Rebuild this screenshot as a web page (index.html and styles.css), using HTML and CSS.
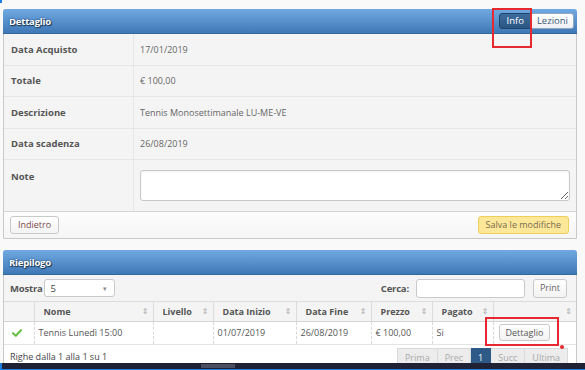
FILE: index.html
```html
<!DOCTYPE html>
<html lang="it">
<head>
<meta charset="utf-8">
<link rel="stylesheet" href="styles.css">
</head>
<body>
<div class="page">
  <section class="panel">
    <header class="panel-head">
      <span class="panel-title">Dettaglio</span>
      <div class="btn-group">
        <button class="seg seg-active">Info</button>
        <button class="seg">Lezioni</button>
      </div>
    </header>
    <div class="rows">
      <div class="row"><div class="lbl">Data Acquisto</div><div class="val">17/01/2019</div></div>
      <div class="row"><div class="lbl">Totale</div><div class="val">€ 100,00</div></div>
      <div class="row"><div class="lbl">Descrizione</div><div class="val">Tennis Monosettimanale LU-ME-VE</div></div>
      <div class="row"><div class="lbl">Data scadenza</div><div class="val">26/08/2019</div></div>
      <div class="row row-note"><div class="lbl">Note</div><div class="val"><textarea class="note"></textarea></div></div>
    </div>
    <footer class="panel-foot">
      <button class="btn">Indietro</button>
      <button class="btn btn-warn">Salva le modifiche</button>
    </footer>
  </section>

  <section class="panel panel2">
    <header class="panel-head"><span class="panel-title">Riepilogo</span></header>
    <div class="controls">
      <label class="ctl-lbl">Mostra <span class="select">5<span class="caret">▾</span></span></label>
      <div class="search">
        <span class="ctl-lbl">Cerca:</span>
        <span class="input"></span>
        <button class="btn btn-print">Print</button>
      </div>
    </div>
    <table class="grid">
      <thead>
        <tr>
          <th class="c0"></th>
          <th class="c1">Nome<span class="sort">⇕</span></th>
          <th class="c2">Livello<span class="sort">⇕</span></th>
          <th class="c3">Data Inizio<span class="sort">⇕</span></th>
          <th class="c4">Data Fine<span class="sort">⇕</span></th>
          <th class="c5">Prezzo<span class="sort">⇕</span></th>
          <th class="c6">Pagato<span class="sort">⇕</span></th>
          <th class="c7"><span class="sort">⇕</span></th>
        </tr>
      </thead>
      <tbody>
        <tr>
          <td class="c0"><svg class="check" viewBox="0 0 10 8" width="10" height="8"><path d="M1 4.2 L3.8 6.8 L9 1.2" fill="none" stroke="#6cc04a" stroke-width="2.2" stroke-linecap="round" stroke-linejoin="round"/></svg></td>
          <td>Tennis Lunedì 15:00</td>
          <td></td>
          <td>01/07/2019</td>
          <td>26/08/2019</td>
          <td>€ 100,00</td>
          <td>Si</td>
          <td class="c7"><button class="btn btn-det">Dettaglio</button></td>
        </tr>
      </tbody>
    </table>
    <div class="table-foot">
      <span class="info">Righe dalla 1 alla 1 su 1</span>
      <div class="pager">
        <span class="pg">Prima</span><span class="pg">Prec</span><span class="pg pg-cur">1</span><span class="pg">Succ</span><span class="pg">Ultima</span>
      </div>
    </div>
  </section>
  <div class="taskbar"><span class="tb-seg"></span></div>
  <span class="hl hl-info"></span>
  <span class="hl hl-det"></span>
  <span class="hl-dot"></span>
  <span class="corner"></span>
</div>
</body>
</html>
```
FILE: styles.css
```css
* { box-sizing: border-box; }
html, body { margin: 0; padding: 0; }
body {
  width: 585px; height: 370px; overflow: hidden;
  background: #f9f9f9;
  font-family: "Open Sans", "DejaVu Sans", sans-serif;
  font-size: 9.5px;
  color: #555;
}
.page { position: relative; padding: 9px 8px 0 3px; height: 370px; }
.panel {
  border: 1px solid #c9c9c9;
  border-radius: 3px 3px 0 0;
  background: #f4f4f4;
}
.panel-head {
  height: 25px;
  display: flex; align-items: center; justify-content: space-between;
  padding: 0 3px 0 6px;
  background: linear-gradient(#71a9e2, #3f78b6);
  border-bottom: 1px solid #33679c;
  margin: -1px -1px 0 -1px;
  border-radius: 3px 3px 0 0;
}
.panel-title {
  color: #fff; font-weight: 700; font-size: 9.5px;
  text-shadow: 0 0 2px #1d3550, 1px 1px 1px #1d3550;
  letter-spacing: -0.2px;
}
.btn-group { display: flex; }
.seg {
  font-family: inherit; font-size: 9.5px;
  height: 16px; padding: 0 5px; margin: 0;
  border: 1px solid #8fa9c4; background: linear-gradient(#fff, #eef1f4);
  color: #3d5a7a; line-height: 14px;
}
.seg:first-child { border-radius: 3px 0 0 3px; }
.seg:last-child { border-radius: 0 3px 3px 0; border-left: none; }
.seg-active { background: linear-gradient(#3d6c9c, #2b5683); color: #fff; border-color: #1f456c; padding: 0 7px; }
.rows { display: flex; flex-direction: column; }
.row {
  display: grid; grid-template-columns: 130px 1fr;
  height: 31.5px;
  border-bottom: 1px solid #e6e6e6;
}
.lbl {
  display: flex; align-items: center;
  padding-left: 7px;
  font-weight: 700; color: #555;
  border-right: 1px solid #e6e6e6;
}
.val { display: flex; align-items: center; padding-left: 6px; color: #666; font-size: 9px; }
.row-note { height: 52px; border-bottom: 1px solid #d4d4d4; }
.row-note .lbl { align-items: flex-start; padding-top: 10px; }
.row-note .val { align-items: flex-start; padding-top: 10px; padding-right: 6px; }
.note {
  width: 100%; height: 31px; resize: vertical;
  border: 1px solid #c8c8c8; border-radius: 3px; background: #fff;
  box-shadow: inset 0 1px 2px rgba(0,0,0,.06);
}
.panel-foot {
  height: 26px; display: flex; align-items: center; justify-content: space-between;
  padding: 0 7px 0 6px;
  background: linear-gradient(#fdfdfd, #f5f5f5);
  border-radius: 0 0 3px 3px;
}
.btn {
  font-family: inherit; font-size: 9px; color: #7a4a4a;
  height: 18px; padding: 0 7px; margin: 0;
  border: 1px solid #c9c9c9; border-radius: 3px;
  background: linear-gradient(#fff, #f3f3f3);
  line-height: 16px;
}
.btn-warn { background: #fde89a; border-color: #efcf5a; color: #7a6a4a; padding: 0 7px; }
.panel2 { margin-top: 11px; }
.controls {
  height: 27px; display: flex; align-items: center; justify-content: space-between;
  padding: 0 9px 0 6px;
  border-bottom: 1px solid #dcdcdc;
}
.ctl-lbl { font-weight: 700; color: #555; display: flex; align-items: center; letter-spacing: -0.2px; }
.select {
  display: inline-flex; align-items: center; justify-content: space-between;
  width: 71px; height: 18px; margin-left: 1px;
  border: 1px solid #c9c9c9; border-radius: 3px; background: #fff;
  font-weight: 400; color: #444; padding: 0 7px 0 6px; letter-spacing: 0;
}
.caret { font-size: 7px; color: #888; }
.search { display: flex; align-items: center; }
.input {
  display: inline-block; width: 109px; height: 19px; margin-left: 7px;
  border: 1px solid #c9c9c9; border-radius: 3px; background: #fff;
}
.btn-print { margin-left: 8px; height: 19px; color: #666; padding: 0 6px; }
.grid { width: 100%; border-collapse: collapse; table-layout: fixed; background: #fff; }
.grid th {
  height: 19px; text-align: left; font-weight: 700; color: #555; font-size: 9px;
  background: #f4f4f4; border-right: 1px solid #dcdcdc; border-bottom: 1px solid #d4d4d4;
  padding: 0 4px 0 9px; position: relative;
}
.grid th.c0 { width: 30px; }
.grid th.c1 { width: 119px; }
.grid th.c2 { width: 60px; }
.grid th.c3 { width: 83px; }
.grid th.c4 { width: 75px; }
.grid th.c5 { width: 61px; }
.grid th.c6 { width: 61px; }
.grid th.c7 { border-right: none; }
.sort { position: absolute; right: 4px; top: 3px; font-size: 8px; color: #aaa; font-weight: 400; }
.grid td {
  height: 23px; font-size: 9px; color: #555; padding: 0 4px;
  border-right: 1px dashed #d8d8d8; border-bottom: 1px solid #e4e4e4;
  white-space: nowrap;
}
.grid td.c0 { padding-left: 8px; }
.grid td.c7 { border-right: none; padding-left: 5px; }
.check { display: block; }
.btn-det { color: #555; height: 17px; padding: 0 6px; }
.table-foot {
  height: 22px; display: flex; align-items: center; justify-content: space-between;
  padding: 2px 8px 0 6px; background: #fff;
}
.info { color: #444; font-size: 9px; }
.pager { display: flex; align-self: flex-end; }
.pg {
  height: 19px; display: flex; align-items: center; padding: 0 7px;
  background: #ececec; border: 1px solid #dadada; border-left: none;
  color: #aaa; font-size: 9px;
}
.pg:first-child { border-left: 1px solid #dadada; }
.pg-cur { background: #2d5a87; color: #fff; border-color: #2d5a87; padding: 0 7px; }
.taskbar {
  position: absolute; left: 0; right: 0; bottom: 0; height: 7px;
  background: #1f2235; border-bottom: 1px solid #1a7fe0; border-left: 2px solid #1a7fe0;
}
.tb-seg { position: absolute; left: 199px; width: 34px; top: 1px; height: 4px; background: #4a4e60; }
.hl { position: absolute; border: 2px solid #e5292f; }
.hl-info { left: 492px; top: 8px; width: 40px; height: 40px; }
.hl-det { left: 485px; top: 317px; width: 74px; height: 29px; }
.hl-dot { position: absolute; left: 560px; top: 345px; width: 4px; height: 4px; border-radius: 2px; background: #e5292f; }
.corner { position: absolute; left: 0; top: 0; width: 2px; height: 3px; background: #1a7fe0; }
```
